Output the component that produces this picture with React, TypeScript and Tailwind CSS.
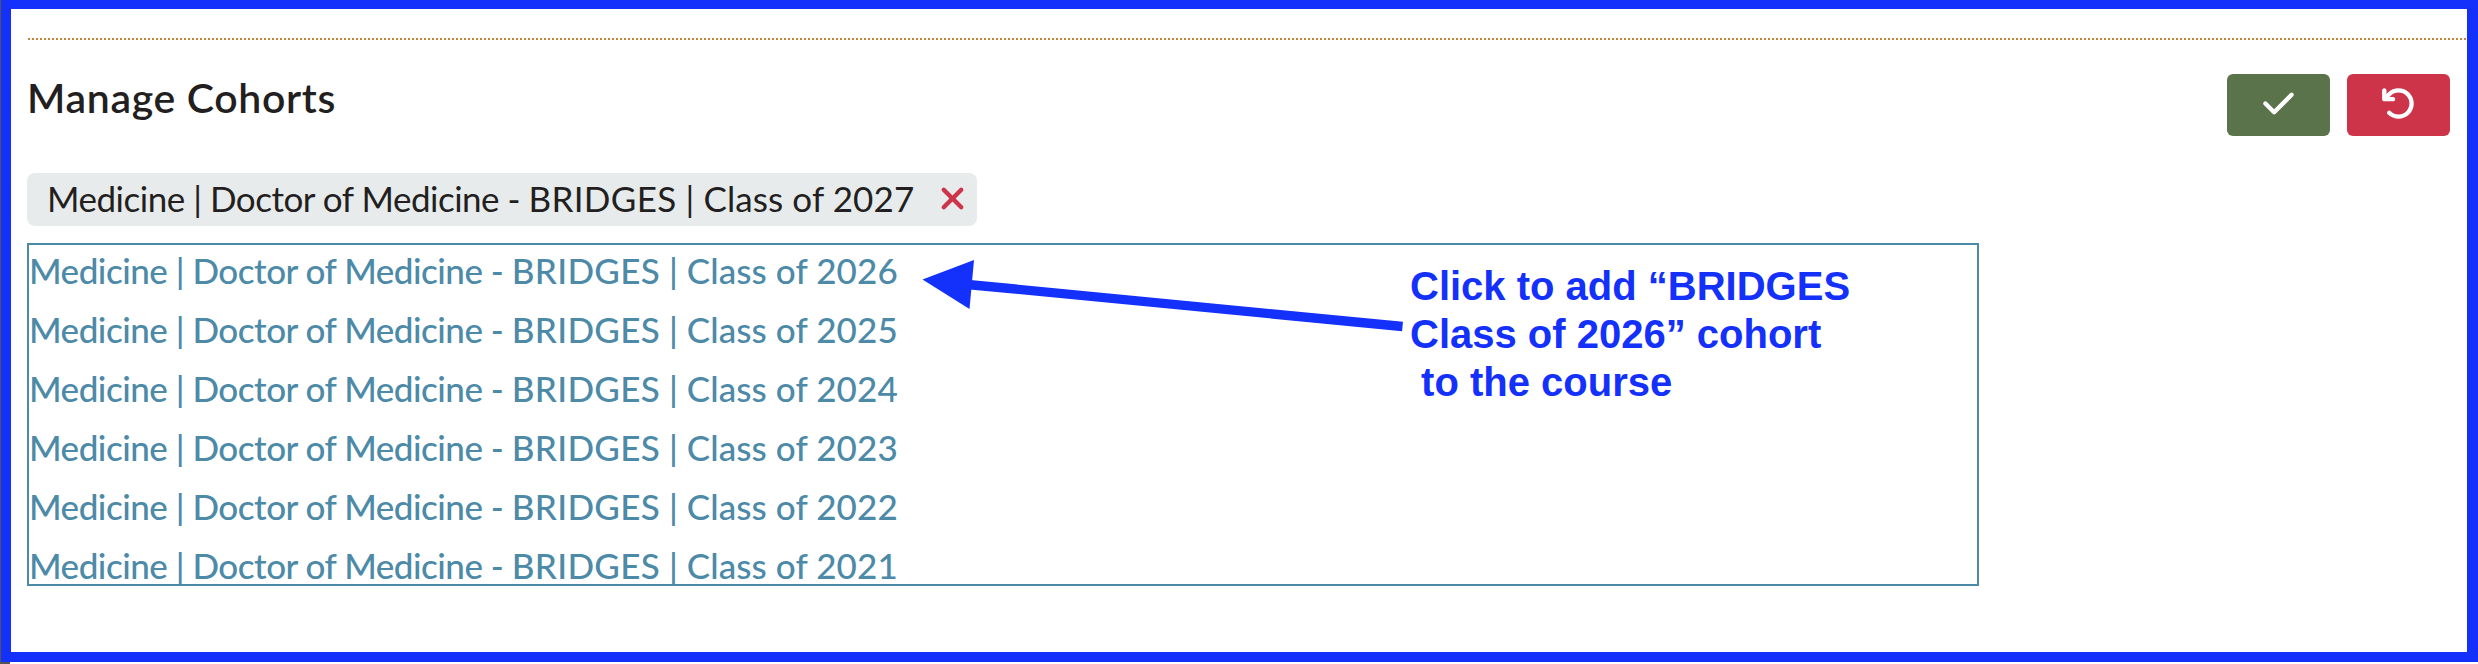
import { FaArrowRotateLeft, FaCheck, FaXmark } from "react-icons/fa6";

const years = [2026, 2025, 2024, 2023, 2022, 2021];

function CohortName({ year }: { year: number }) {
  return (
    <span className="whitespace-pre">
      <span className="tracking-[-0.48px]">{"Medicine | Doctor of Medicine - "}</span>
      <span className="tracking-[0.3px]">BRIDGES</span>
      <span className="tracking-[0.1px]">{` | Class of ${year}`}</span>
    </span>
  );
}

function Callout() {
  return (
    <>
      <svg
        className="pointer-events-none absolute top-[240px] left-[900px]"
        width="520"
        height="110"
        viewBox="900 240 520 110"
        fill="none"
      >
        <path d="M970 284.7 1402.5 326.5" stroke="#1430fb" strokeWidth="9.4" />
        <path d="M922.5 279.5 974 260 969.5 309Z" fill="#1430fb" />
      </svg>
      <p className="absolute top-[262px] left-[1410px] font-['Liberation_Sans',sans-serif] text-[40px] leading-[48px] font-bold whitespace-pre text-[#1430fb]">
        {"Click to add “BRIDGES\nClass of 2026” cohort\n to the course"}
      </p>
    </>
  );
}

export default function App() {
  return (
    <div className="relative h-[664px] w-[2478px] overflow-hidden bg-white font-['Lato',sans-serif] text-[#231f20]">
      <div className="h-[664px] w-[10px] bg-[#555]">
        <div className="ml-px h-[662px] w-[2477px] border-t-[9px] border-r-[11px] border-b-[10px] border-l-[10px] border-[#1430fb] bg-white pt-[29px]">
          <div className="ml-[17px] h-[2px] bg-[repeating-linear-gradient(90deg,#c4853a_0_2px,transparent_2px_4px)]" />
          <div className="ml-4 pr-[17px]">
            <header className="flex h-[133px] items-start justify-between pt-[34px]">
              <h2 className="text-[41px] leading-[47px] font-semibold tracking-[0.65px]">Manage Cohorts</h2>
              <div className="flex gap-[17px]">
                <button aria-label="Save" className="flex h-[62px] w-[103px] justify-center rounded-md bg-[#5a734b] pt-3 text-white">
                  <FaCheck className="size-[35px]" />
                </button>
                <button aria-label="Undo" className="flex h-[62px] w-[103px] justify-center rounded-md bg-[#cd344a] pt-3 text-white">
                  <FaArrowRotateLeft className="size-[35px]" />
                </button>
              </div>
            </header>
            <div className="flex h-[53px] w-[950px] items-center justify-between rounded-lg bg-[#e7ebec] pr-[7px] pl-[20px]">
              <span className="pb-0.5 text-[35px] leading-[51px] tracking-[0.02px]">
                <CohortName year={2027} />
              </span>
              <FaXmark className="size-[35px] -translate-y-px text-[#cd344a]" />
            </div>
            <ul className="mt-[17px] h-[343px] w-[1952px] border-2 border-[#4c8aa8] text-[#4c8aa8]">
              {years.map((year) => (
                <li key={year} className="h-[59px] text-[35px] leading-[51px] font-medium">
                  <CohortName year={year} />
                </li>
              ))}
            </ul>
          </div>
        </div>
      </div>
      <Callout />
    </div>
  );
}
